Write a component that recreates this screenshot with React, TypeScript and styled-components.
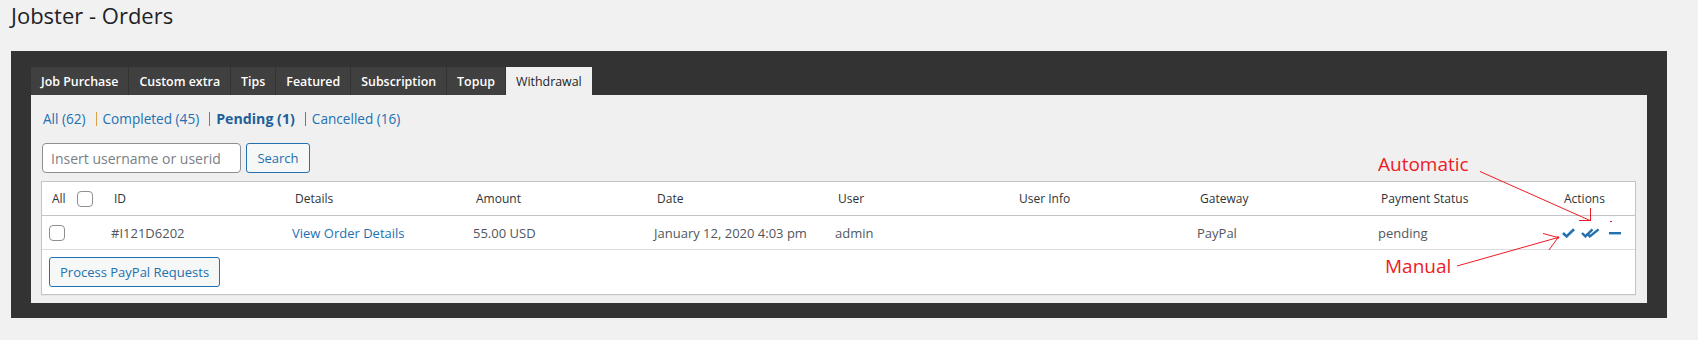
import React from "react"
import styled, { createGlobalStyle } from "styled-components"

const GlobalStyle = createGlobalStyle`
  html, body {
    margin: 0;
    padding: 0;
    background: #f1f1f1;
    font-family: "Open Sans", "Liberation Sans", sans-serif;
  }
`

const Page = styled.div`
  position: relative;
  width: 1698px;
  height: 340px;
  overflow: hidden;
  padding-top: 1px;
  box-sizing: border-box;
`

const Title = styled.h1`
  margin: 0;
  padding-left: 11px;
  font-size: 22px;
  line-height: 29px;
  font-weight: 400;
  color: #1d2327;
`

const Panel = styled.div`
  margin: 21px 0 0 11px;
  width: 1656px;
  box-sizing: border-box;
  padding: 16px 20px 15px 20px;
  background: #333333;
`

const Tabs = styled.div`
  display: flex;
  gap: 1px;
  height: 28px;
`

const Tab = styled.div<{ $active?: boolean }>`
  display: flex;
  align-items: center;
  height: 28px;
  padding: 0 10px;
  font-size: 12.4px;
  font-weight: ${p => (p.$active ? 400 : 600)};
  color: ${p => (p.$active ? "#1d2327" : "#ffffff")};
  background: ${p => (p.$active ? "#f0f0f1" : "#404040")};
  white-space: nowrap;
`

const Content = styled.div`
  background: #f0f0f1;
  padding: 15px 11px 8px 10px;
`

const Filters = styled.div`
  display: flex;
  align-items: center;
  height: 18px;
  padding-left: 2px;
  font-size: 13.6px;
  line-height: 18px;
`

const FilterLink = styled.a<{ $current?: boolean }>`
  color: ${p => (p.$current ? "#1f5f98" : "#2271b1")};
  font-weight: ${p => (p.$current ? 700 : 400)};
  font-size: ${p => (p.$current ? "14.2px" : "inherit")};
  text-decoration: none;
`

const Sep = styled.span<{ $color: string }>`
  display: inline-block;
  width: 1px;
  height: 14px;
  margin: 0 6px 0 10px;
  background: ${p => p.$color};
`

const SearchForm = styled.div`
  display: flex;
  gap: 5px;
  margin-top: 15px;
  margin-left: 1px;
  height: 30px;
`

const SearchInput = styled.input`
  width: 199px;
  height: 30px;
  box-sizing: border-box;
  padding: 0 8px;
  border: 1px solid #8c8f94;
  border-radius: 4px;
  background: #fff;
  font-family: "Open Sans", "Liberation Sans", sans-serif;
  font-size: 14px;
  color: #2c3338;
  &::placeholder {
    color: #7a7f85;
  }
`

const Button = styled.button<{ $width: number }>`
  width: ${p => p.$width}px;
  height: 30px;
  box-sizing: border-box;
  padding: 0 10px;
  border: 1px solid #2271b1;
  border-radius: 3px;
  background: #f6f7f7;
  color: #2271b1;
  font-family: "Open Sans", "Liberation Sans", sans-serif;
  font-size: 13px;
  white-space: nowrap;
`

const Table = styled.div`
  margin-top: 8px;
  border: 1px solid #c3c4c7;
  background: #fff;
  box-shadow: 0 1px 1px rgba(0, 0, 0, 0.04);
`

const Row = styled.div<{ $head?: boolean }>`
  display: grid;
  grid-template-columns: 61px repeat(8, 181px) 1fr;
  height: 33px;
  border-bottom: 1px solid ${p => (p.$head ? "#c3c4c7" : "#dcdcde")};
  align-items: center;
`

const HeadCell = styled.div<{ $pad?: number }>`
  display: flex;
  align-items: center;
  padding-left: ${p => p.$pad ?? 10}px;
  font-size: 12px;
  color: #2c3338;
  white-space: nowrap;
`

const Cell = styled.div<{ $link?: boolean; $pad?: number }>`
  display: flex;
  align-items: center;
  padding-left: ${p => p.$pad ?? 8}px;
  font-size: 13px;
  color: ${p => (p.$link ? "#2271b1" : "#50575e")};
  white-space: nowrap;
`

const Check = styled.input.attrs({ type: "checkbox" })`
  appearance: none;
  margin: 0;
  width: 16px;
  height: 16px;
  box-sizing: border-box;
  border: 1px solid #8c8f94;
  border-radius: 4px;
  background: #fff;
`

const AllLabel = styled.span`
  margin-right: 11px;
`

const Actions = styled.div`
  display: flex;
  align-items: center;
  gap: 6px;
  padding-left: 11px;
  color: #2271b1;
`

const Footer = styled.div`
  padding: 7px 8px 7px 7px;
`

const Overlay = styled.svg`
  position: absolute;
  top: 0;
  left: 0;
  pointer-events: none;
`

const Note = styled.span<{ $x: number; $y: number }>`
  position: absolute;
  left: ${p => p.$x}px;
  top: ${p => p.$y}px;
  font-size: 19px;
  line-height: 19px;
  color: #ed1c24;
  pointer-events: none;
`

const tabs = ["Job Purchase", "Custom extra", "Tips", "Featured", "Subscription", "Topup", "Withdrawal"]

const headers = ["ID", "Details", "Amount", "Date", "User", "User Info", "Gateway", "Payment Status"]

const CheckIcon = () => (
  <svg width="13" height="10" viewBox="0 0 13 10">
    <path d="M1 5 L4.6 8.4 L12 1.2" fill="none" stroke="currentColor" strokeWidth="2.6" />
  </svg>
)

const DoubleCheckIcon = () => (
  <svg width="19" height="10" viewBox="0 0 19 10">
    <path d="M1 5 L4.4 8.4 L11.5 1.4" fill="none" stroke="currentColor" strokeWidth="2.4" />
    <path d="M6.6 6.2 L8.8 8.4 L17.6 1.4" fill="none" stroke="currentColor" strokeWidth="2.4" />
  </svg>
)

const MinusIcon = () => (
  <svg width="15" height="10" viewBox="0 0 15 10">
    <rect x="3" y="4" width="12" height="2.4" fill="currentColor" />
  </svg>
)

export default function App() {
  return (
    <Page>
      <GlobalStyle />
      <Title>Jobster - Orders</Title>
      <Panel>
        <Tabs>
          {tabs.map(t => (
            <Tab key={t} $active={t === "Withdrawal"}>{t}</Tab>
          ))}
        </Tabs>
        <Content>
          <Filters>
            <FilterLink href="#">All (62)</FilterLink>
            <Sep $color="#d9a24a" />
            <FilterLink href="#">Completed (45)</FilterLink>
            <Sep $color="#b0607e" />
            <FilterLink href="#" $current>Pending (1)</FilterLink>
            <Sep $color="#6d7a8a" />
            <FilterLink href="#">Cancelled (16)</FilterLink>
          </Filters>
          <SearchForm>
            <SearchInput placeholder="Insert username or userid" />
            <Button $width={64}>Search</Button>
          </SearchForm>
          <Table>
            <Row $head>
              <HeadCell>
                <AllLabel>All</AllLabel>
                <Check />
              </HeadCell>
              {headers.map(h => (
                <HeadCell key={h} $pad={11}>{h}</HeadCell>
              ))}
              <HeadCell $pad={13}>Actions</HeadCell>
            </Row>
            <Row>
              <Cell $pad={7}><Check /></Cell>
              <Cell>#I121D6202</Cell>
              <Cell $link>View Order Details</Cell>
              <Cell>55.00 USD</Cell>
              <Cell>January 12, 2020 4:03 pm</Cell>
              <Cell>admin</Cell>
              <Cell />
              <Cell>PayPal</Cell>
              <Cell>pending</Cell>
              <Actions>
                <CheckIcon />
                <DoubleCheckIcon />
                <MinusIcon />
              </Actions>
            </Row>
            <Footer>
              <Button $width={171}>Process PayPal Requests</Button>
            </Footer>
          </Table>
        </Content>
      </Panel>

      <Note $x={1378} $y={155}>Automatic</Note>
      <Note $x={1385} $y={257}>Manual</Note>
      <Overlay width="1698" height="340" viewBox="0 0 1698 340">
        <g stroke="#ed1c24" strokeWidth="1" fill="none">
          <line x1="1480" y1="171.5" x2="1590" y2="220.5" />
          <line x1="1590.5" y1="208" x2="1590.5" y2="221" />
          <line x1="1579" y1="220.5" x2="1591" y2="220.5" />
          <line x1="1457" y1="266" x2="1558" y2="237.5" />
          <line x1="1543" y1="233.5" x2="1558" y2="237.5" />
          <line x1="1549" y1="250" x2="1558" y2="237.5" />
          <line x1="1610" y1="221.5" x2="1612" y2="221.5" />
        </g>
        <circle cx="1558" cy="237.5" r="1.2" fill="#ed1c24" />
      </Overlay>
    </Page>
  )
}
